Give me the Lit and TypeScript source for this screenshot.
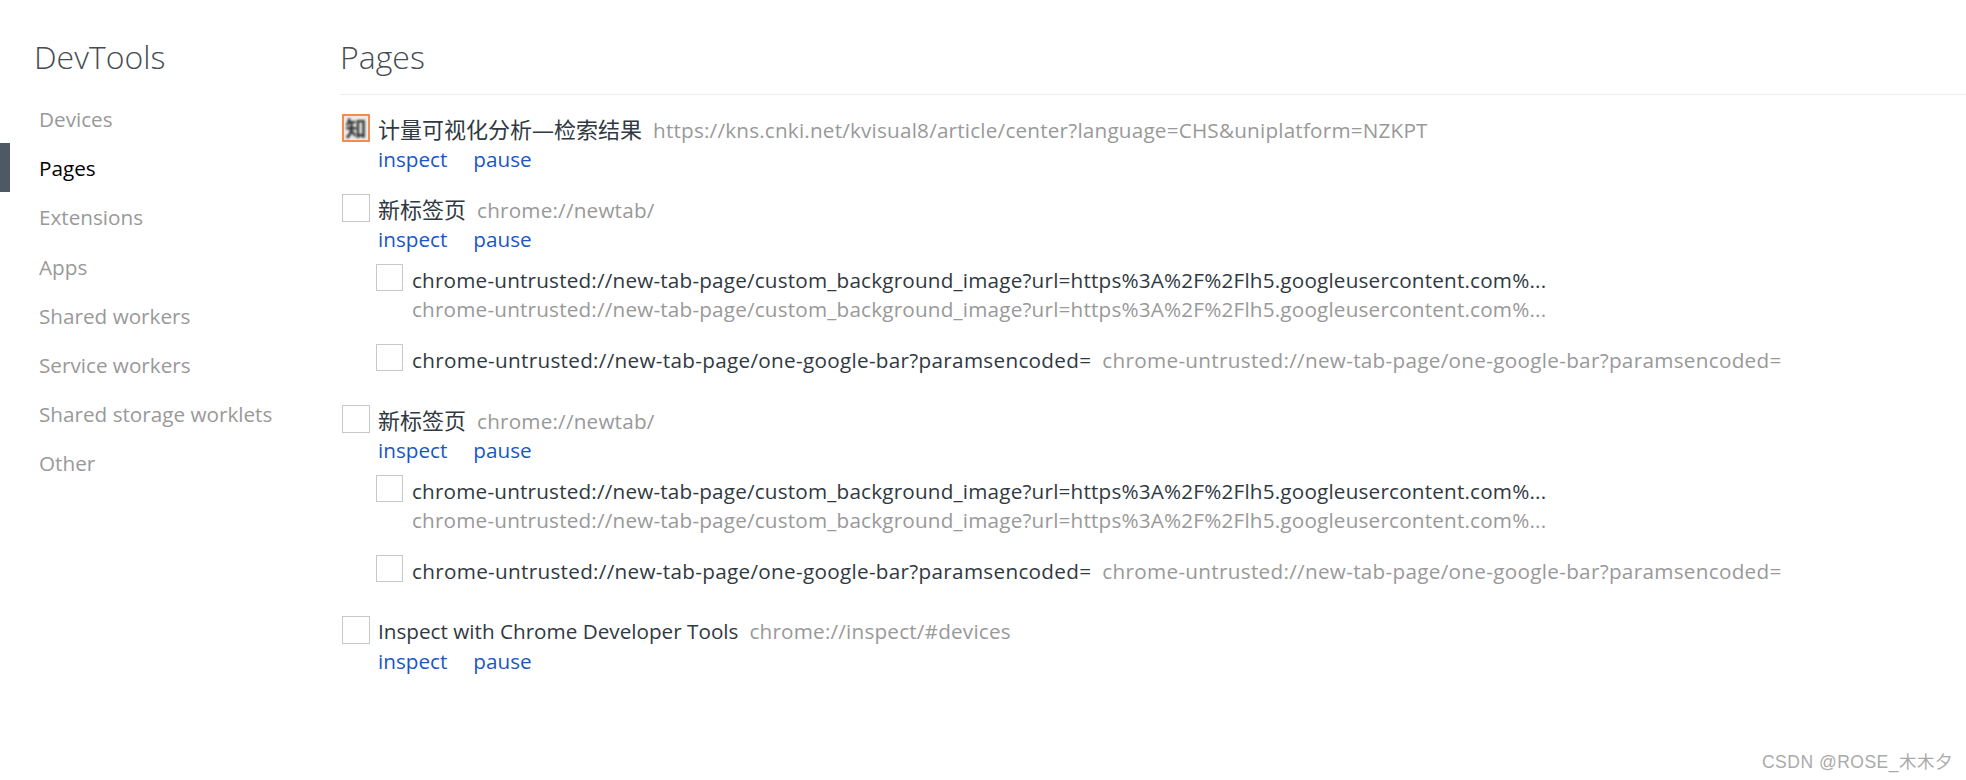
import { LitElement, html, css } from "lit";
import { customElement } from "lit/decorators.js";

const BG = "chrome-untrusted://new-tab-page/custom_background_image?url=https%3A%2F%2Flh5.googleusercontent.com%...";
const OG = "chrome-untrusted://new-tab-page/one-google-bar?paramsencoded=";
const NAV = ["Devices", "Pages", "Extensions", "Apps", "Shared workers", "Service workers", "Shared storage worklets", "Other"];

@customElement("app-root")
export class AppRoot extends LitElement {
  static styles = css`
    :host { display: block; height: 780px; position: relative; overflow: hidden; background: #fff;
      font-family: "Open Sans", "Noto Sans CJK SC", sans-serif; font-size: 20.7px; color: #303942; }
    .page { display: flex; height: 100%; }
    .side { width: 340px; flex: none; padding-top: 35px; box-sizing: border-box; }
    .side h1 { margin: 0 0 0 34px; font-size: 32px; font-weight: 300; line-height: 44px; color: #474c53; }
    .nav { margin-top: 15px; }
    .nav div { height: 49.2px; line-height: 50px; padding-left: 39px; color: #999; }
    .nav div.on { color: #000; border-left: 10px solid #4f5965; padding-left: 29px; box-sizing: border-box; }
    .main { flex: 1; min-width: 0; }
    .main h2 { margin: 0; padding-top: 35px; height: 59px; font-size: 32px; font-weight: 300; line-height: 44px; color: #474c53; border-bottom: 1px solid #eee; }
    .list { padding-top: 19px; padding-left: 2px; }
    .row { display: flex; gap: 8px; }
    .top { margin-bottom: 19px; }
    .ico { width: 28px; height: 28px; border: 1px solid #c8c8c8; box-sizing: border-box; flex: none; }
    .fav { border: 2px solid #f58b4c; background: #ecebea; display: flex; align-items: center; justify-content: center; }
    .fav span { font-size: 21px; line-height: 24px; font-weight: 700; color: #333; filter: blur(0.8px); }
    .line { height: 30px; line-height: 30px; white-space: nowrap; }
    .name { color: #303942; }
    .cjk { font-size: 22px; line-height: 30px; }
    .url { color: #999; margin-left: 11px; letter-spacing: .2px; }
    .long { color: #303942; letter-spacing: .19px; }
    .wide { letter-spacing: .3px; }
    .acts { display: flex; gap: 26px; height: 31px; line-height: 31px; color: #1a56c4; }
    .subs { margin-left: -2px; margin-top: 9px; }
    .sub { margin-bottom: 19px; gap: 9px; }
    .sub:last-child { margin-bottom: 12px; }
    .sub .ico { width: 27px; height: 27px; }
    .sub .line { line-height: 32px; }
    .urlline { height: 31px; color: #999; line-height: 31px; letter-spacing: .19px; white-space: nowrap; }
    .mark { position: absolute; right: 13px; bottom: 7px; font-size: 17.5px; color: #aaa; font-family: "Liberation Sans", "Noto Sans CJK SC", sans-serif; letter-spacing: .5px; }
  `;

  sub(long: boolean) {
    return long
      ? html`<div class="row sub"><div class="ico"></div><div>
          <div class="line long">${BG}</div><div class="urlline">${BG}</div></div></div>`
      : html`<div class="row sub"><div class="ico"></div><div class="line">
          <span class="long wide">${OG}</span><span class="url wide">${OG}</span></div></div>`;
  }

  item(name: string, url: string, fav = false, subs = false, cjk = true) {
    return html`<div class="row top">
      <div class="ico ${fav ? "fav" : ""}">${fav ? html`<span>知</span>` : ""}</div>
      <div>
        <div class="line"><span class="name ${cjk ? "cjk" : ""}">${name}</span><span class="url">${url}</span></div>
        <div class="acts"><span>inspect</span><span>pause</span></div>
        ${subs ? html`<div class="subs">${this.sub(true)}${this.sub(false)}</div>` : ""}
      </div>
    </div>`;
  }

  render() {
    return html`<div class="page">
      <div class="side">
        <h1>DevTools</h1>
        <div class="nav">${NAV.map((n) => html`<div class=${n === "Pages" ? "on" : ""}>${n}</div>`)}</div>
      </div>
      <div class="main">
        <h2>Pages</h2>
        <div class="list">
          ${this.item("计量可视化分析—检索结果", "https://kns.cnki.net/kvisual8/article/center?language=CHS&uniplatform=NZKPT", true)}
          ${this.item("新标签页", "chrome://newtab/", false, true)}
          ${this.item("新标签页", "chrome://newtab/", false, true)}
          ${this.item("Inspect with Chrome Developer Tools", "chrome://inspect/#devices", false, false, false)}
        </div>
      </div>
    </div>
    <div class="mark">CSDN @ROSE_木木夕</div>`;
  }
}
